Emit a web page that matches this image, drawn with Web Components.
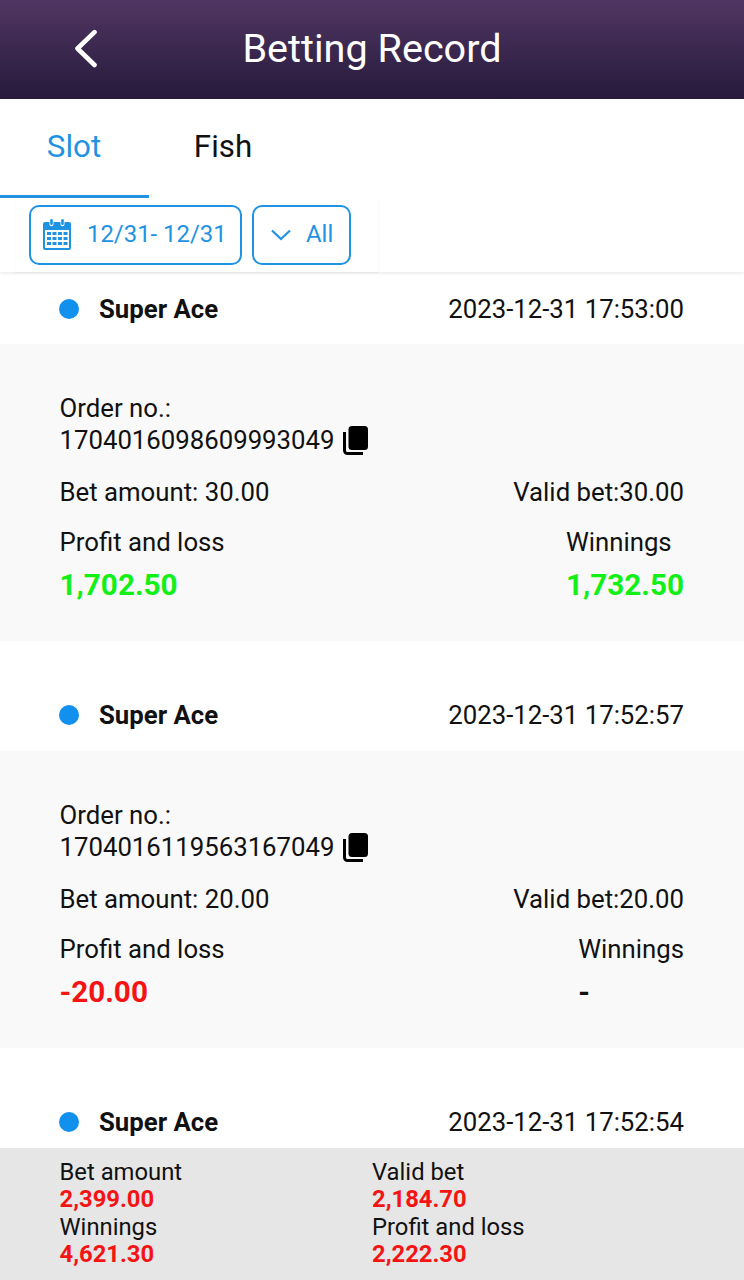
<!DOCTYPE html>
<html>
<head>
<meta charset="utf-8">
<title>Betting Record</title>
<style>
    html, body { margin: 0; padding: 0; background: #fff; }
    body { font-family: Roboto, "Liberation Sans", sans-serif; color: #111; }
</style>
</head>
<body>
<betting-page>
    <app-header slot="header">Betting Record</app-header>
    <tab-bar slot="tabs"></tab-bar>
    <filter-bar slot="filters"></filter-bar>
    <record-card game="Super Ace" time="2023-12-31 17:53:00" order="1704016098609993049" bet="30.00" valid="30.00" profit="1,702.50" winnings="1,732.50" tone="win" first></record-card>
    <record-card game="Super Ace" time="2023-12-31 17:52:57" order="1704016119563167049" bet="20.00" valid="20.00" profit="-20.00" winnings="-" tone="loss"></record-card>
    <record-card game="Super Ace" time="2023-12-31 17:52:54"></record-card>
    <summary-bar slot="summary"></summary-bar>
</betting-page>

<script>
class BettingPage extends HTMLElement {
    constructor () {
        super()
        this.root = this.attachShadow({mode: "open"})
        this.root.innerHTML = `
        <style>
            :host { display: flex; flex-direction: column; height: 1280px; overflow: hidden; }
            .list { flex: 1; min-height: 0; overflow: hidden; }
        </style>
        <slot name="header"></slot>
        <slot name="tabs"></slot>
        <slot name="filters"></slot>
        <div class="list"><slot></slot></div>
        <slot name="summary"></slot>
        `
    }
}

class AppHeader extends HTMLElement {
    constructor () {
        super()
        this.root = this.attachShadow({mode: "open"})
        this.root.innerHTML = `
        <style>
            :host {
                display: flex;
                align-items: center;
                justify-content: center;
                position: relative;
                height: 99px;
                box-sizing: border-box;
                padding-bottom: 2px;
                flex: none;
                color: #fff;
                font-size: 39.6px;
                background: linear-gradient(#503662, #261a3b);
            }
            svg { position: absolute; left: 73px; top: 29px; }
        </style>
        <svg width="26" height="40" viewBox="0 0 26 40" fill="none" stroke="#fff" stroke-width="4.6" stroke-linecap="round" stroke-linejoin="round">
            <path d="M21.5 3.2 L4.5 19.5 L21.5 36"/>
        </svg>
        <slot></slot>
        `
    }
}

class TabBar extends HTMLElement {
    constructor () {
        super()
        this.root = this.attachShadow({mode: "open"})
        this.root.innerHTML = `
        <style>
            :host { display: flex; height: 99px; flex: none; font-size: 31.3px; background: #fff; }
            div { width: 149px; box-sizing: border-box; display: flex; align-items: center; justify-content: center; padding: 0 1px 5px 0; }
            .active { color: #1f93e2; border-bottom: 3px solid #1f93e2; padding-bottom: 2px; }
        </style>
        <div class="active">Slot</div>
        <div>Fish</div>
        `
    }
}

class FilterBar extends HTMLElement {
    constructor () {
        super()
        this.root = this.attachShadow({mode: "open"})
        this.root.innerHTML = `
        <style>
            :host { display: block; height: 74px; flex: none; position: relative; z-index: 1; box-shadow: 0 2px 2px #efefef; background: #fff; }
            .row {
                display: flex;
                gap: 10px;
                width: 363px;
                height: 74px;
                box-sizing: border-box;
                margin-left: 15px;
                padding: 7px 0 0 14px;
                box-shadow: 0 1px 1px #e6e6e6;
            }
            .btn {
                display: flex;
                align-items: center;
                box-sizing: border-box;
                height: 59.5px;
                border: 2px solid #1f93e2;
                border-radius: 10px;
                color: #1f93e2;
                font-size: 23.9px;
                padding-bottom: 2px;
            }
            .date { width: 213px; padding-left: 12px; gap: 16px; }
            .all { width: 99px; padding-left: 17px; gap: 15px; }
            svg { margin-top: 2px; }
        </style>
        <div class="row">
            <div class="btn date">
                <svg width="28" height="31" viewBox="0 0 28 31" fill="#1f93e2">
                    <path fill-rule="evenodd" d="M2 3h4.5v2.2a2 2 0 0 0 4 0V3h7v2.2a2 2 0 0 0 4 0V3H26a2 2 0 0 1 2 2v24a2 2 0 0 1-2 2H2a2 2 0 0 1-2-2V5a2 2 0 0 1 2-2zM2 11v18h24V11z"/>
                    <rect x="7.2" y="0" width="2.6" height="6" rx="1.3"/>
                    <rect x="18.2" y="0" width="2.6" height="6" rx="1.3"/>
                    <path d="M4 13h4v3H4zM9.5 13h4v3h-4zM15 13h4v3h-4zM20.5 13h4v3h-4zM4 18h4v3H4zM9.5 18h4v3h-4zM15 18h4v3h-4zM20.5 18h4v3h-4zM4 23h4v3H4zM9.5 23h4v3h-4zM15 23h4v3h-4zM20.5 23h4v3h-4z"/>
                </svg>
                <span>12/31- 12/31</span>
            </div>
            <div class="btn all">
                <svg width="20" height="12" viewBox="0 0 20 12" fill="none" stroke="#1f93e2" stroke-width="2.2">
                    <path d="M1 1.5 L10 10 L19 1.5"/>
                </svg>
                <span>All</span>
            </div>
        </div>
        `
    }
}

class RecordCard extends HTMLElement {
    constructor () {
        super()
        this.root = this.attachShadow({mode: "open"})
    }

    connectedCallback () {
        this.render()
    }

    // the last card is cut by the summary bar, only its head is passed in
    renderBody () {
        const get = (name) => this.getAttribute(name)
        if ( !this.hasAttribute("order") ) return ""
        return `
        <div class="body">
            <div class="order">
                <div>Order no.:</div>
                <div class="number">
                    <span>${get("order")}</span>
                    <svg width="25" height="29" viewBox="0 0 25 29">
                        <rect x="5.5" y="0" width="19.5" height="24" rx="3.5" fill="#000"/>
                        <path d="M1.5 6v18.5a3 3 0 0 0 3 3H20" fill="none" stroke="#000" stroke-width="3"/>
                    </svg>
                </div>
            </div>
            <div class="row amounts">
                <div>Bet amount: ${get("bet")}</div>
                <div>Valid bet:${get("valid")}</div>
            </div>
            <div class="row results">
                <div>
                    <div>Profit and loss</div>
                    <div class="value ${get("tone")}">${get("profit")}</div>
                </div>
                <div>
                    <div>Winnings</div>
                    <div class="value ${get("winnings") === "-" ? "none" : get("tone")}">${get("winnings")}</div>
                </div>
            </div>
        </div>
        `
    }

    render () {
        const get = (name) => this.getAttribute(name)
        this.root.innerHTML = `
        <style>
            :host { display: block; font-size: 25.75px; padding-top: 38px; }
            :host([first]) { padding-top: 0; }
            :host([first]) .head { padding-top: 2px; }
            .head { display: flex; align-items: center; justify-content: space-between; box-sizing: border-box; height: 72px; padding: 0 60px 0 59px; background: #fff; }
            .name { display: flex; align-items: center; gap: 20px; font-weight: 700; }
            .dot { width: 20px; height: 20px; border-radius: 50%; background: #1290ee; }
            .body { height: 297px; box-sizing: border-box; padding: 48px 60px 0 59.5px; background: #f9f9f9; }
            .order { line-height: 32px; }
            .number { display: flex; align-items: center; gap: 9px; }
            .row { display: flex; justify-content: space-between; }
            .amounts { margin-top: 20px; line-height: 32px; }
            .results { margin-top: 18px; line-height: 32px; }
            .value { margin-top: 11px; font-size: 29.7px; font-weight: 700; line-height: 32px; }
            .win { color: #12f018; }
            .loss { color: #f51414; }
            .none { color: #111; }
        </style>
        <div class="head">
            <div class="name"><span class="dot"></span><span>${get("game")}</span></div>
            <div>${get("time")}</div>
        </div>
        ${this.renderBody()}
        `
    }
}

class SummaryBar extends HTMLElement {
    constructor () {
        super()
        this.root = this.attachShadow({mode: "open"})
        this.root.innerHTML = `
        <style>
            :host { display: grid; grid-template-columns: 312.5px 1fr; align-content: start; height: 132px; flex: none; box-sizing: border-box; padding: 11px 60px 0 59.5px; background: #e6e6e6; font-size: 23.8px; line-height: 27.3px; position: relative; }
            b { display: block; color: #f51414; font-weight: 700; }
        </style>
        <div>Bet amount<b>2,399.00</b></div>
        <div>Valid bet<b>2,184.70</b></div>
        <div>Winnings<b>4,621.30</b></div>
        <div>Profit and loss<b>2,222.30</b></div>
        `
    }
}

customElements.define("betting-page", BettingPage)
customElements.define("app-header", AppHeader)
customElements.define("tab-bar", TabBar)
customElements.define("filter-bar", FilterBar)
customElements.define("record-card", RecordCard)
customElements.define("summary-bar", SummaryBar)
</script>
</body>
</html>
